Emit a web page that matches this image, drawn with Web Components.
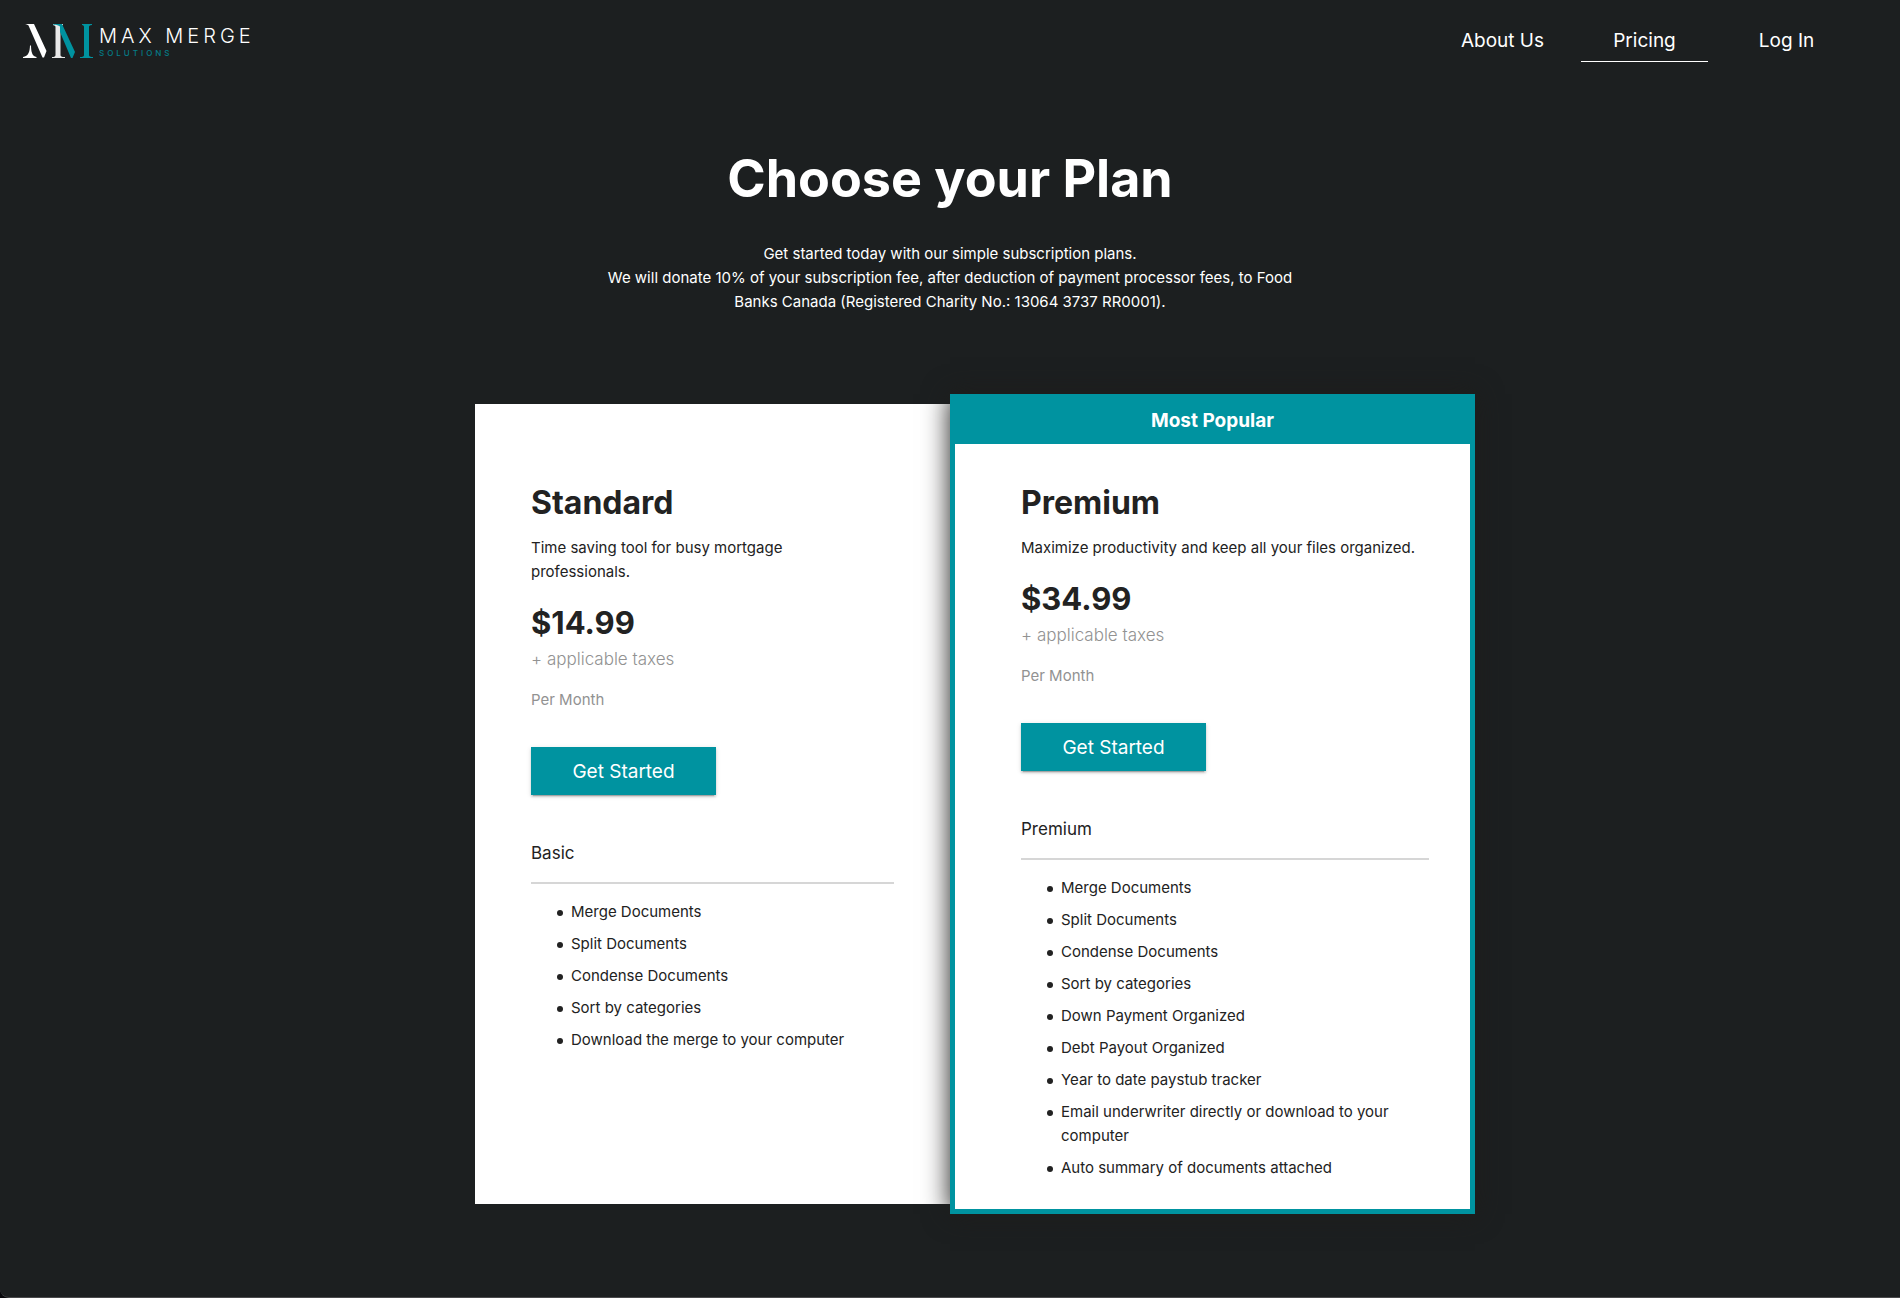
<!DOCTYPE html>
<html lang="en">
<head>
<meta charset="utf-8">
<title>Max Merge Solutions – Pricing</title>
<style>
  html { background: #08080c; }
  body {
    --page: #1c1f20;
    --brand: #0093a0;
    --ink: #222;
    --muted: #929292;
    margin: 0;
    color: #fff;
    font: 15px/24px Inter, "Liberation Sans", sans-serif;
  }
</style>
</head>
<body>
<pricing-page></pricing-page>

<template id="brand-logo">
  <style>
    :host { display: block; }
    a { display: flex; align-items: center; gap: 6px; color: #fff; text-decoration: none; }
    svg { display: block; width: 70px; height: 34px; }
    .words { display: flex; flex-direction: column; }
    .name { font: 300 20px/23px Inter, sans-serif; letter-spacing: 4px; }
    .sub { font: 500 8px/10px Inter, sans-serif; letter-spacing: 3px; color: var(--brand); opacity: .8; }
  </style>
  <a href="#home" aria-label="Max Merge Solutions">
    <svg viewBox="0 1 70 34" aria-hidden="true">
      <path fill="#fff" d="M2 1H11L23.500 28L21 34.500L19.500 34.500L5.500 2.500C5 1.800 3.500 1.500 2 1Z"/>
      <path fill="#fff" d="M7 22.500H8C8.200 29 9 33 13.500 34V35H0V34C5.500 33 6.700 29 7 22.500Z"/>
      <path fill="#e8e8e8" d="M30 1H40V2C38 2.500 37.500 3 37.500 4V32C37.500 33.500 38.500 34 42 34V35H29V34C31.500 34 32.500 33.500 32.500 32V4C32.500 3 31.500 2.500 30 2Z"/>
      <path fill="var(--brand)" d="M30 1H39L52 29L49.500 35H48L37 9V4C37 2.500 34 2 30 1.500Z"/>
      <path fill="var(--brand)" d="M59 1H69V2C66.500 2.300 66 3 66 4V32C66 33.500 67 34 70 34V35H57V34C60 34 61 33.500 61 32V4C61 3 60.500 2.300 59 2Z"/>
    </svg>
    <span class="words"><span class="name">MAX MERGE</span><span class="sub">SOLUTIONS</span></span>
  </a>
</template>

<template id="site-header">
  <style>
    :host { display: flex; align-items: center; justify-content: space-between; height: 82px; padding: 0 50px 0 23px; }
    nav { display: flex; align-items: center; gap: 15px; }
  </style>
  <brand-logo></brand-logo>
  <nav aria-label="Main"><slot></slot></nav>
</template>

<template id="nav-link">
  <style>
    :host { display: block; width: 127px; }
    a { display: block; text-align: center; font-size: 19px; line-height: 40px; font-weight: 400; color: #fff; text-decoration: none; }
    :host([current]) a { border-bottom: 1px solid #fff; }
  </style>
  <a><slot></slot></a>
</template>

<template id="action-button">
  <style>
    :host { display: block; }
    button {
      width: 185px; height: 48px; padding: 2px 0 0; border: 0; cursor: pointer;
      background: var(--brand); color: #fff; font: 400 19px/24px Inter, sans-serif;
      box-shadow: 0 3px 1px -2px rgba(0,0,0,.2), 0 2px 2px rgba(0,0,0,.14), 0 1px 5px rgba(0,0,0,.12);
    }
  </style>
  <button type="button"><slot></slot></button>
</template>

<template id="plan-card">
  <style>
    :host { display: flex; flex-direction: column; box-sizing: border-box; background: #fff; color: var(--ink); }
    .body { padding: 79px 56px 21px; }
    .badge { display: none; }
    .blurb { max-width: 300px; }
    h2 { margin: 0 0 13px; font-size: 32px; line-height: 40px; font-weight: 700; }
    p { margin: 0; }
    .price { margin-top: 15px; font-size: 31px; line-height: 48px; font-weight: 700; }
    .tax { color: var(--muted); font-size: 17px; font-weight: 300; }
    .period { margin-top: 17px; color: var(--muted); }
    action-button { margin-top: 35px; }
    h3 { margin: 46px 0 16px; padding-bottom: 17px; border-bottom: 2px solid #d6d6d6; font-size: 17px; line-height: 24px; font-weight: 400; }
    ul { margin: 0; padding-left: 26px; list-style: none; }
    :host([featured]) { border: 5px solid var(--brand); box-shadow: 0 0 25px #1e1d1b; }
    :host([featured]) .badge { display: block; background: var(--brand); color: #fff; text-align: center; font-size: 19px; line-height: 43px; padding-bottom: 2px; font-weight: 700; }
    :host([featured]) .body { padding: 39px 41px 21px 66px; }
    :host([featured]) .blurb { max-width: none; }
  </style>
  <div class="badge">Most Popular</div>
  <div class="body">
    <h2></h2>
    <p class="blurb"><slot name="blurb"></slot></p>
    <p class="price"></p>
    <p class="tax">+ applicable taxes</p>
    <p class="period">Per Month</p>
    <action-button>Get Started</action-button>
    <h3></h3>
    <ul><slot></slot></ul>
  </div>
</template>

<template id="pricing-page">
  <style>
    :host {
      display: block; box-sizing: border-box; min-height: 100vh; padding-bottom: 83px;
      background: var(--page); border-bottom: 1px solid #4a4a4c; border-bottom-left-radius: 9px;
    }
    .intro { text-align: center; padding: 66px 24px 0; }
    h1 { margin: 0; font-size: 52px; line-height: 62px; font-weight: 700; }
    .intro p { max-width: 724px; margin: 32px auto 0; }
    .plans { display: grid; grid-template-columns: 1fr 1fr; align-items: stretch; width: 50%; margin: 80px auto 0; }
    plan-card:not([featured]) { margin: 10px 0; }
    plan-card[featured] { margin-right: -50px; z-index: 1; }
    li { display: flex; gap: 8px; margin-bottom: 8px; }
    li::before { content: ""; flex: none; width: 6px; height: 6px; margin-top: 10px; border-radius: 50%; background: var(--ink); }
  </style>
  <site-header>
    <nav-link href="#about">About Us</nav-link>
    <nav-link href="#pricing" current>Pricing</nav-link>
    <nav-link href="#login">Log In</nav-link>
  </site-header>
  <main>
    <section class="intro">
      <h1>Choose your Plan</h1>
      <p>Get started today with our simple subscription plans.<br>We will donate 10% of your subscription fee, after deduction of payment processor fees, to Food Banks Canada (Registered Charity No.: 13064 3737 RR0001).</p>
    </section>
    <section class="plans">
      <plan-card name="Standard" price="$14.99" tier="Basic">
        <span slot="blurb">Time saving tool for busy mortgage professionals.</span>
        <li>Merge Documents</li>
        <li>Split Documents</li>
        <li>Condense Documents</li>
        <li>Sort by categories</li>
        <li>Download the merge to your computer</li>
      </plan-card>
      <plan-card name="Premium" price="$34.99" tier="Premium" featured>
        <span slot="blurb">Maximize productivity and keep all your files organized.</span>
        <li>Merge Documents</li>
        <li>Split Documents</li>
        <li>Condense Documents</li>
        <li>Sort by categories</li>
        <li>Down Payment Organized</li>
        <li>Debt Payout Organized</li>
        <li>Year to date paystub tracker</li>
        <li>Email underwriter directly or download to your computer</li>
        <li>Auto summary of documents attached</li>
      </plan-card>
    </section>
  </main>
</template>

<script>
  class TemplateElement extends HTMLElement {
    constructor() {
      super();
      const template = document.getElementById(this.localName);
      this.attachShadow({ mode: "open" }).append(document.importNode(template.content, true));
    }
  }
  class BrandLogo extends TemplateElement {}
  class SiteHeader extends TemplateElement {}
  class ActionButton extends TemplateElement {}
  class NavLink extends TemplateElement {
    connectedCallback() {
      const link = this.shadowRoot.querySelector("a");
      link.href = this.getAttribute("href");
      if (this.hasAttribute("current")) link.setAttribute("aria-current", "page");
    }
  }
  class PlanCard extends TemplateElement {
    connectedCallback() {
      const root = this.shadowRoot;
      root.querySelector("h2").textContent = this.getAttribute("name");
      root.querySelector(".price").textContent = this.getAttribute("price");
      root.querySelector("h3").textContent = this.getAttribute("tier");
    }
  }
  class PricingPage extends TemplateElement {}

  customElements.define("brand-logo", BrandLogo);
  customElements.define("site-header", SiteHeader);
  customElements.define("nav-link", NavLink);
  customElements.define("action-button", ActionButton);
  customElements.define("plan-card", PlanCard);
  customElements.define("pricing-page", PricingPage);
</script>
</body>
</html>
